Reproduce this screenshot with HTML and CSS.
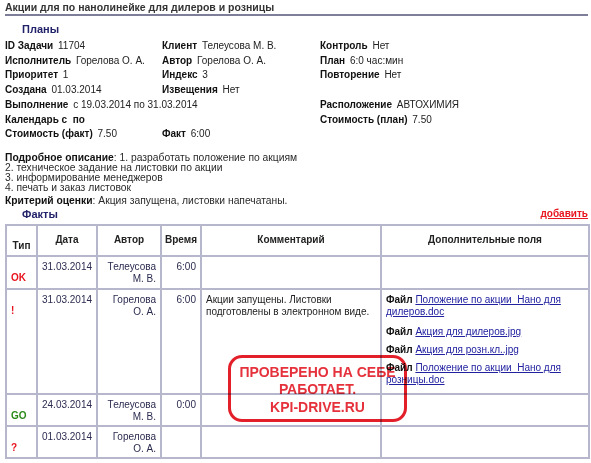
FILE: index.html
```html
<!DOCTYPE html>
<html lang="ru">
<head>
<meta charset="utf-8">
<title>Акции для по нанолинейке для дилеров и розницы</title>
<link rel="stylesheet" href="styles.css">
</head>
<body>
<div class="page">
  <div class="title">Акции для по нанолинейке для дилеров и розницы</div>
  <div class="section">Планы</div>
  <div class="info">
    <div><b>ID Задачи</b> 11704</div>
    <div><b>Клиент</b> Телеусова М. В.</div>
    <div><b>Контроль</b> Нет</div>

    <div><b>Исполнитель</b> Горелова О. А.</div>
    <div><b>Автор</b> Горелова О. А.</div>
    <div><b>План</b> 6:0 час:мин</div>

    <div><b>Приоритет</b> 1</div>
    <div><b>Индекс</b> 3</div>
    <div><b>Повторение</b> Нет</div>

    <div><b>Создана</b> 01.03.2014</div>
    <div><b>Извещения</b> Нет</div>
    <div></div>

    <div class="span2"><b>Выполнение</b> с 19.03.2014 по 31.03.2014</div>
    <div><b>Расположение</b> АВТОХИМИЯ</div>

    <div class="span2"><b>Календарь с &nbsp;по</b></div>
    <div><b>Стоимость (план)</b> 7.50</div>

    <div><b>Стоимость (факт)</b> 7.50</div>
    <div><b>Факт</b> 6:00</div>
    <div></div>
  </div>

  <div class="desc">
    <b>Подробное описание</b>: 1. разработать положение по акциям<br>
    2. техническое задание на листовки по акции<br>
    3. информирование менеджеров<br>
    4. печать и заказ листовок
  </div>
  <div class="crit"><b>Критерий оценки</b>: Акция запущена, листовки напечатаны.</div>

  <div class="facts-head">
    <span class="section inline">Факты</span>
    <a class="add" href="#">добавить</a>
  </div>

  <div class="table-wrap">
    <table class="facts">
      <colgroup>
        <col class="c-type"><col class="c-date"><col class="c-author"><col class="c-time"><col class="c-comment"><col class="c-extra">
      </colgroup>
      <thead>
        <tr class="rh">
          <th class="th-type">Тип</th>
          <th>Дата</th>
          <th>Автор</th>
          <th>Время</th>
          <th>Комментарий</th>
          <th>Дополнительные поля</th>
        </tr>
      </thead>
      <tbody>
        <tr class="r1">
          <td class="type red">OK</td>
          <td class="date">31.03.2014</td>
          <td class="author">Телеусова<br>М. В.</td>
          <td class="time">6:00</td>
          <td></td>
          <td></td>
        </tr>
        <tr class="r2">
          <td class="type red">!</td>
          <td class="date">31.03.2014</td>
          <td class="author">Горелова<br>О. А.</td>
          <td class="time">6:00</td>
          <td class="comment">Акции запущены. Листовки подготовлены в электронном виде.</td>
          <td class="extra">
            <p><b>Файл</b> <a href="#">Положение по акции&nbsp; Нано для дилеров.doc</a></p>
            <p><b>Файл</b> <a href="#">Акция для дилеров.jpg</a></p>
            <p><b>Файл</b> <a href="#">Акция для розн.кл..jpg</a></p>
            <p><b>Файл</b> <a href="#">Положение по акции&nbsp; Нано для розницы.doc</a></p>
          </td>
        </tr>
        <tr class="r3">
          <td class="type green">GO</td>
          <td class="date">24.03.2014</td>
          <td class="author">Телеусова<br>М. В.</td>
          <td class="time">0:00</td>
          <td></td>
          <td></td>
        </tr>
        <tr class="r4">
          <td class="type red">?</td>
          <td class="date">01.03.2014</td>
          <td class="author">Горелова<br>О. А.</td>
          <td class="time"></td>
          <td></td>
          <td></td>
        </tr>
      </tbody>
    </table>
    <div class="stamp">ПРОВЕРЕНО НА СЕБЕ<br>РАБОТАЕТ.<br>KPI-DRIVE.RU</div>
  </div>
</div>
</body>
</html>
```

FILE: styles.css
```css
html, body {
  margin: 0;
  padding: 0;
  background: #ffffff;
}

body {
  font-family: "Liberation Sans", Arial, sans-serif;
  font-size: 10px;
  color: #222222;
}

.page {
  width: 591px;
  position: relative;
}

.title {
  margin: 0 3px 0 5px;
  padding-top: 1px;
  font-weight: bold;
  font-size: 10.5px;
  line-height: 13px;
  color: #333333;
  border-bottom: 2px solid #7e7e98;
}

.section {
  margin: 6px 0 0 22px;
  font-size: 11px;
  line-height: 14px;
  font-weight: bold;
  color: #22226a;
}

.section.inline {
  margin: 0;
}

.info {
  display: grid;
  grid-template-columns: 157px 158px 1fr;
  margin: 3px 0 0 5px;
  line-height: 14.7px;
  font-size: 10px;
  color: #222222;
}

.info b {
  color: #111111;
  margin-right: 2px;
}

.info .span2 {
  grid-column: span 2;
}

.desc {
  margin: 11px 0 0 5px;
  font-size: 10.3px;
  line-height: 10px;
  color: #2a2a2a;
}

.desc b, .crit b {
  color: #111111;
}

.crit {
  margin: 3px 0 0 5px;
  font-size: 10.3px;
  line-height: 10px;
  color: #2a2a2a;
}

.facts-head {
  display: flex;
  justify-content: space-between;
  align-items: center;
  margin: 1px 3px 0 22px;
  height: 14px;
}

.add {
  color: #e8141e;
  font-weight: bold;
  font-size: 10px;
  text-decoration: underline;
}

.table-wrap {
  position: relative;
  margin: 3px 0 0 5px;
  width: 583px;
}

.facts {
  border-collapse: collapse;
  width: 583px;
  table-layout: fixed;
  font-size: 10px;
  color: #2b2b50;
}

.c-type { width: 31px; }
.c-date { width: 60px; }
.c-author { width: 64px; }
.c-time { width: 40px; }
.c-comment { width: 180px; }
.c-extra { width: 208px; }

.facts th,
.facts td {
  border: 2px solid #b6b6cc;
  line-height: 12px;
}

.rh { height: 31px; }
.r1 { height: 33px; }
.r2 { height: 105px; }
.r3 { height: 32px; }
.r4 { height: 31px; }

.facts th {
  padding: 0 2px;
  font-weight: bold;
  color: #222222;
  text-align: center;
  vertical-align: middle;
}

.facts th.th-type {
  padding-top: 12px;
}

.facts td {
  vertical-align: top;
  padding: 4px 4px 2px;
}

.facts td.type {
  font-weight: bold;
  padding-top: 15px;
  padding-left: 4px;
}

.red { color: #e8141e; }
.green { color: #2a8a1a; }

.facts td.date {
  text-align: center;
}

.facts td.author,
.facts td.time {
  text-align: right;
}

.facts td.comment {
  color: #222222;
}

.extra p {
  margin: 0 0 6px 0;
  color: #222222;
}

.extra p:first-child {
  margin-bottom: 8px;
}

.extra p:last-child {
  margin-bottom: 0;
}

.extra b {
  color: #111111;
}

.extra a {
  color: #2222a0;
  text-decoration: underline;
}

.stamp {
  position: absolute;
  left: 223px;
  top: 131px;
  width: 173px;
  height: 55px;
  border: 3px solid #e3202a;
  border-radius: 14px;
  padding-top: 6px;
  box-sizing: content-box;
  color: rgba(227, 32, 42, 0.92);
  font-weight: bold;
  font-size: 14px;
  line-height: 17.5px;
  text-align: center;
  mix-blend-mode: multiply;
}
```
